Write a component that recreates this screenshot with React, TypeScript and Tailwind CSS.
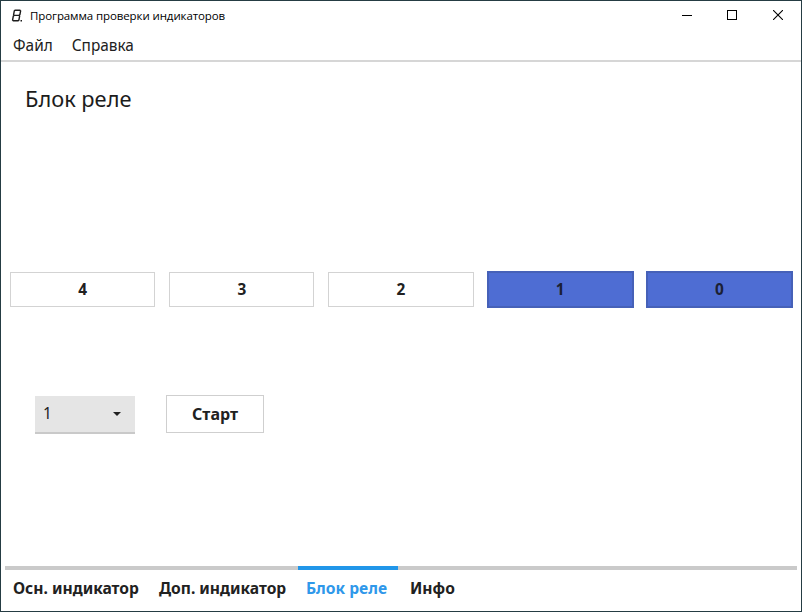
import React from "react";

type Relay = { label: string; active: boolean };

const relays: Relay[] = [
  { label: "4", active: false },
  { label: "3", active: false },
  { label: "2", active: false },
  { label: "1", active: true },
  { label: "0", active: true },
];

const tabs = [
  { label: "Осн. индикатор", width: "w-[146px]" },
  { label: "Доп. индикатор", width: "w-[147px]" },
  { label: "Блок реле", width: "w-[104px]", active: true },
  { label: "Инфо", width: "w-[64px]" },
];

function SegmentIcon() {
  return (
    <svg width="12" height="14" viewBox="0 0 12 14" fill="none" stroke="#1c1c1c" strokeWidth="1.4">
      <path d="M4.1 1.2H8.9L9.6 1.9L8.9 5.6L8 6.4L8.6 7.2L7.9 11.1L7.1 11.8H2.3L1.6 11.1L2.3 7.2L3.1 6.4L2.6 5.6L3.3 1.9Z M3.1 6.4H8" />
      <path d="M9.5 11.8H11" />
    </svg>
  );
}

function TitleBar() {
  return (
    <header className="flex h-[30px] shrink-0 items-center pl-[10px]">
      <SegmentIcon />
      <h1 className="ml-[7px] w-[200px] whitespace-nowrap font-['Open_Sans','Noto_Sans',sans-serif] text-[11.5px] leading-4 tracking-[-0.1px] text-black">
        Программа проверки индикаторов
      </h1>
      <div className="ml-auto flex h-[28px] items-center self-start">
        <button aria-label="Свернуть" className="flex h-full w-[45px] items-center justify-center">
          <svg width="10" height="10" shapeRendering="crispEdges"><path d="M0 5.5H10" stroke="#000" /></svg>
        </button>
        <button aria-label="Развернуть" className="flex h-full w-[46px] items-center justify-center">
          <svg width="10" height="10" shapeRendering="crispEdges"><path d="M.5 .5H9.5V9.5H.5Z" fill="none" stroke="#000" /></svg>
        </button>
        <button aria-label="Закрыть" className="flex h-full w-[46px] items-center justify-center">
          <svg width="10" height="10"><path d="M0 0L10 10M10 0L0 10" stroke="#000" strokeWidth="1.1" /></svg>
        </button>
      </div>
    </header>
  );
}

export default function App() {
  return (
    <div className="flex h-[612px] w-[802px] flex-col overflow-hidden border border-[#253c43] bg-white font-['Noto_Sans',sans-serif] text-[15.4px] text-[#212121]">
      <TitleBar />
      <nav className="flex h-[31px] shrink-0 gap-[19px] border-b-2 border-[#d6d6d6] pl-3 leading-[29px]">
        <button>Файл</button>
        <button>Справка</button>
      </nav>
      <main className="flex flex-1 flex-col">
        <h2 className="mt-[22px] ml-6 text-[21.8px] leading-[30px] text-[#1c1c1c]">Блок реле</h2>
        <div className="mt-[157px] mr-2 ml-2 grid h-[37px] grid-cols-5 gap-3 font-bold">
          {relays.map((relay) =>
            relay.active ? (
              <button key={relay.label} className="border-2 border-[#4661b8] bg-[#4e6dd3] text-[#1b2033]">
                {relay.label}
              </button>
            ) : (
              <button key={relay.label} className="m-px border border-[#d3d3d3] bg-white">
                {relay.label}
              </button>
            )
          )}
        </div>
        <div className="mt-[86px] ml-[34px] flex">
          <button className="mt-[2px] flex h-[38px] w-[100px] items-center justify-between border-b-2 border-[#c9c9c9] bg-[#e5e5e5] pr-[14px] pl-2">
            <span>1</span>
            <svg width="8" height="4" viewBox="0 0 8 4"><path d="M0 0H8L4 4Z" fill="#212121" /></svg>
          </button>
          <button className="mt-px ml-[31px] h-[38px] w-[98px] border border-[#cfcfcf] bg-white pb-px text-[16px] font-bold">Старт</button>
        </div>
      </main>
      <footer className="mx-1 flex h-[45px] shrink-0">
        {tabs.map((tab) => (
          <button
            key={tab.label}
            className={`${tab.width} flex shrink-0 flex-col text-left text-[15.6px] font-bold whitespace-nowrap ${
              tab.active ? "text-[#2f98ea]" : ""
            }`}
          >
            <span className="flex h-1 w-full bg-[#cacaca]">
              {tab.active && <span className="w-[100px] bg-[#2196e9]" />}
            </span>
            <span className="pt-[4px] pl-2 leading-[29px]">{tab.label}</span>
          </button>
        ))}
        <div className="h-1 flex-1 bg-[#cacaca]" />
      </footer>
    </div>
  );
}
